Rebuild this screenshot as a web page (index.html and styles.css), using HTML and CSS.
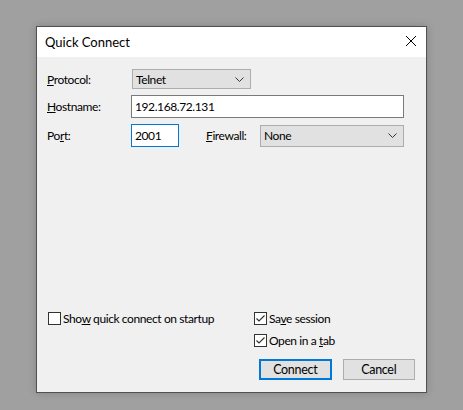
FILE: index.html
```html
<!DOCTYPE html>
<html>
<head>
<meta charset="utf-8">
<link rel="stylesheet" href="styles.css">
</head>
<body>
<div class="dialog">
  <div class="titlebar">
    <span class="title">Quick Connect</span>
    <svg class="close" width="12" height="12" viewBox="0 0 12 12"><path d="M1 1 L11 11 M11 1 L1 11" stroke="#000" stroke-width="1"/></svg>
  </div>
  <div class="content">
    <div class="form">
      <div class="row row-protocol">
        <label class="label"><u>P</u>rotocol:</label>
        <div class="combo combo-protocol"><span>Telnet</span><svg class="chev" width="9" height="5" viewBox="0 0 9 5"><path d="M0.5 0.5 L4.5 4.5 L8.5 0.5" fill="none" stroke="#333" stroke-width="1"/></svg></div>
      </div>
      <div class="row row-host">
        <label class="label"><u>H</u>ostname:</label>
        <div class="input input-host">192.168.72.131</div>
      </div>
      <div class="row row-port">
        <label class="label">Po<u>r</u>t:</label>
        <div class="input input-port">2001</div>
        <label class="label label-fw"><u>F</u>irewall:</label>
        <div class="combo combo-fw"><span>None</span><svg class="chev" width="9" height="5" viewBox="0 0 9 5"><path d="M0.5 0.5 L4.5 4.5 L8.5 0.5" fill="none" stroke="#333" stroke-width="1"/></svg></div>
      </div>
    </div>
    <div class="footer">
      <div class="footer-left">
        <div class="check"><span class="box"></span><span>Sho<u>w</u> quick connect on startup</span></div>
      </div>
      <div class="footer-right">
        <div class="check"><span class="box checked"><svg width="11" height="11" viewBox="0 0 11 11"><path d="M1.5 5.5 L4 8 L9.5 2.5" fill="none" stroke="#333" stroke-width="1.2"/></svg></span><span>Sa<u>v</u>e session</span></div>
        <div class="check"><span class="box checked"><svg width="11" height="11" viewBox="0 0 11 11"><path d="M1.5 5.5 L4 8 L9.5 2.5" fill="none" stroke="#333" stroke-width="1.2"/></svg></span><span>Open in a <u>t</u>ab</span></div>
        <div class="buttons">
          <button class="btn btn-default">Connect</button>
          <button class="btn">Cancel</button>
        </div>
      </div>
    </div>
  </div>
</div>
</body>
</html>
```
FILE: styles.css
```css
html, body {
  margin: 0;
  padding: 0;
}
body {
  width: 463px;
  height: 410px;
  background: #a0a0a0;
  font-family: "Lato", "Open Sans", sans-serif;
  font-size: 12px;
  letter-spacing: -0.4px;
  color: #000;
  padding: 26px 0 0 36px;
  box-sizing: border-box;
}
.dialog {
  width: 391px;
  height: 367px;
  box-sizing: border-box;
  border: 1px solid #505050;
  background: #f0f0f0;
  display: flex;
  flex-direction: column;
  box-shadow: 0 0 8px rgba(0,0,0,0.18);
}
.titlebar {
  height: 30px;
  background: #fff;
  display: flex;
  align-items: center;
  justify-content: space-between;
  padding: 0 9px 0 8px;
  flex: none;
}
.title {
  font-size: 13px;
  letter-spacing: 0;
}
.close {
  display: block;
  margin-top: -2px;
}
.content {
  flex: 1;
  display: flex;
  flex-direction: column;
  padding: 12px 22px 12px 10px;
}
.form {
  display: flex;
  flex-direction: column;
}
.row {
  display: flex;
  align-items: center;
}
.label {
  width: 84px;
  flex: none;
}
.row-host {
  margin-top: 6px;
}
.row-port {
  margin-top: 6px;
}
.combo {
  box-sizing: border-box;
  height: 20px;
  border: 1px solid #adadad;
  background: #e1e1e1;
  display: flex;
  align-items: center;
  justify-content: space-between;
  padding: 0 6px 0 3px;
}
.combo-protocol {
  width: 119px;
  margin-left: 1px;
}
.combo-fw {
  width: 144px;
  height: 22px;
  margin-left: 0;
}
.label-fw {
  width: 54px;
  margin-left: 27px;
}
.chev {
  display: block;
}
.input {
  box-sizing: border-box;
  height: 23px;
  border: 1px solid #7a7a7a;
  background: #fff;
  display: flex;
  align-items: center;
  padding: 0 3px;
}
.input-host {
  flex: 1;
}
.input-port {
  width: 48px;
  border-color: #0078d7;
}
.footer {
  margin-top: auto;
  display: flex;
  justify-content: space-between;
}
.footer-left {
  padding-left: 1px;
}
.footer-right {
  display: flex;
  flex-direction: column;
  width: 161px;
  margin-right: -11px;
}
.check {
  display: flex;
  align-items: center;
  height: 16px;
  gap: 2px;
}
.footer-right .check + .check {
  margin-top: 6px;
}
.box {
  box-sizing: border-box;
  width: 13px;
  height: 13px;
  border: 1px solid #333;
  background: #fff;
  display: flex;
  align-items: center;
  justify-content: center;
  flex: none;
}
.box svg {
  display: block;
}
.buttons {
  display: flex;
  gap: 11px;
  margin-top: 11px;
  padding-left: 5px;
}
.btn {
  box-sizing: border-box;
  width: 73px;
  height: 21px;
  border: 1px solid #adadad;
  background: #e1e1e1;
  font-family: inherit;
  font-size: 12.5px;
  letter-spacing: -0.3px;
  color: #000;
  padding: 0;
  margin: 0;
}
.btn-default {
  border: 2px solid #0078d7;
}
```
